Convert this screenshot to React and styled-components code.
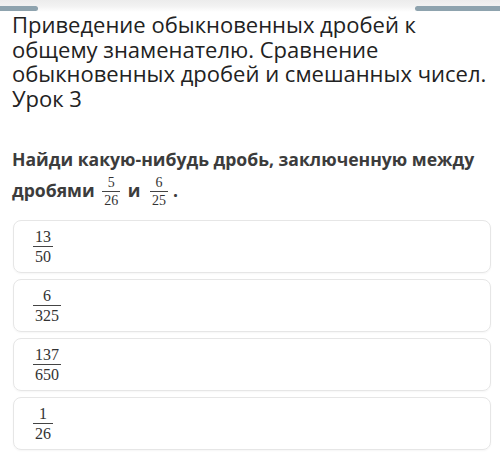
import React from 'react';
import styled, { createGlobalStyle } from 'styled-components';

const Global = createGlobalStyle`
  html, body { margin: 0; padding: 0; background: #fff; }
  body { width: 500px; height: 455px; overflow: hidden; }
`;

const Page = styled.div`
  width: 500px;
  font-family: "Open Sans", "Noto Sans", sans-serif;
`;

const TopStrip = styled.div`
  height: 12px;
  display: flex;
  justify-content: space-between;
  align-items: flex-end;
  background: linear-gradient(#ececec 0, #f2f2f2 6px, #fff 12px);
`;

const Bar = styled.div`
  width: ${p => p.w}px;
  height: 5px;
  margin-bottom: 1px;
  background: #8ea3ae;
  border-radius: ${p => (p.right ? '3px 0 0 3px' : '0 3px 3px 0')};
`;

const Title = styled.h1`
  margin: 0;
  padding: 0 10px 0 12px;
  font-size: 22px;
  line-height: 24.5px;
  font-weight: 400;
  color: #222;
`;

const Question = styled.p`
  margin: 34px 0 0;
  padding: 0 12px;
  font-size: 17.6px;
  line-height: 31px;
  font-weight: 700;
  color: #3c3c3c;
`;

const Frac = styled.span`
  display: inline-flex;
  flex-direction: column;
  align-items: center;
  vertical-align: middle;
  font-family: "Liberation Serif", "DejaVu Serif", serif;
  font-weight: 400;
  font-size: ${p => p.size}px;
  line-height: ${p => p.size}px;
  color: #333;
  margin: 0 ${p => p.gap}px;
`;

const Num = styled.span`
  padding: 0 2px 1px;
  border-bottom: 1px solid #444;
  min-width: 100%;
  text-align: center;
  box-sizing: border-box;
`;

const Den = styled.span`
  padding: 2px 2px 0;
`;

const Options = styled.div`
  display: flex;
  flex-direction: column;
  gap: 6px;
  padding: 12px 9px 0 13px;
`;

const Card = styled.div`
  height: 51px;
  border: 1px solid #e6e6e6;
  border-radius: 8px;
  box-shadow: 0 1px 2px rgba(0, 0, 0, 0.04);
  display: flex;
  align-items: center;
  padding-left: 19px;
`;

const Fraction = ({ n, d, size = 16, gap = 0 }) => (
  <Frac size={size} gap={gap}>
    <Num>{n}</Num>
    <Den>{d}</Den>
  </Frac>
);

const answers = [
  ['13', '50'],
  ['6', '325'],
  ['137', '650'],
  ['1', '26'],
];

export default function App() {
  return (
    <Page>
      <Global />
      <TopStrip>
        <Bar w={38} />
        <Bar w={85} right />
      </TopStrip>
      <Title>
        Приведение обыкновенных дробей к общему знаменателю. Сравнение
        обыкновенных дробей и смешанных чисел. Урок 3
      </Title>
      <Question>
        Найди какую-нибудь дробь, заключенную между дробями{' '}
        <Fraction n="5" d="26" size={14} gap={3} /> и{' '}
        <Fraction n="6" d="25" size={14} gap={5} />.
      </Question>
      <Options>
        {answers.map(([n, d]) => (
          <Card key={n + d}>
            <Fraction n={n} d={d} />
          </Card>
        ))}
      </Options>
    </Page>
  );
}
